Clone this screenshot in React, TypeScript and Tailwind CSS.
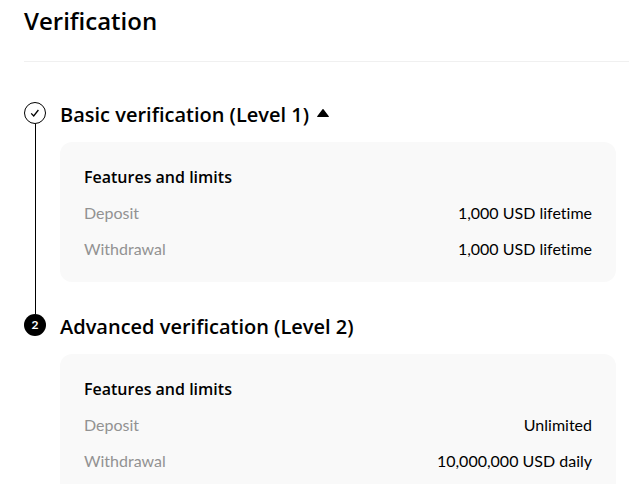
import React, { useState } from 'react'

type Limit = { label: string; value: string }

const basicLimits: Limit[] = [
  { label: 'Deposit', value: '1,000 USD lifetime' },
  { label: 'Withdrawal', value: '1,000 USD lifetime' },
]

const advancedLimits: Limit[] = [
  { label: 'Deposit', value: 'Unlimited' },
  { label: 'Withdrawal', value: '10,000,000 USD daily' },
]

function LimitsCard({ limits }: { limits: Limit[] }) {
  return (
    <div className="mt-3.5 rounded-xl bg-[#f9f9f9] px-6 pt-6 pb-[22px] text-base leading-[22px]">
      <h3 className="font-['Open_Sans',sans-serif] font-semibold">Features and limits</h3>
      <dl>
        {limits.map((limit) => (
          <div key={limit.label} className="mt-3.5 flex justify-between gap-4">
            <dt className="text-[#929292]">{limit.label}</dt>
            <dd className="text-right">{limit.value}</dd>
          </div>
        ))}
      </dl>
    </div>
  )
}

function App() {
  const [open, setOpen] = useState(true)

  return (
    <main className="h-screen overflow-hidden bg-white pl-6 font-['Lato',sans-serif] text-black [font-variant-ligatures:none]">
      <h1 className="border-b border-[#f0f0f0] pt-[5px] pb-[25px] font-['Open_Sans',sans-serif] text-2xl leading-[31px] font-semibold">Verification</h1>
      <ol className="mt-10 pr-[13px]">
        <li className="flex gap-3.5">
          <div className="flex w-[22px] shrink-0 flex-col items-center">
            <span className="flex size-[22px] shrink-0 items-center justify-center rounded-full border border-black">
              <svg className="size-2.5" viewBox="0 0 10 10" fill="none" stroke="currentColor" strokeWidth="1.3" aria-label="Completed">
                <path d="M1.2 5.4 3.7 8 8.4 2" />
              </svg>
            </span>
            <span className="w-px flex-1 bg-black" />
          </div>
          <div className="flex-1 pb-8">
            <h2 className="font-['Open_Sans',sans-serif] text-xl leading-[26px] font-semibold">
              <button type="button" className="flex items-center gap-2" aria-expanded={open} onClick={() => setOpen(!open)}>
                Basic verification (Level 1)
                <svg className={open ? 'mb-1 h-2 w-3' : 'mb-1 h-2 w-3 rotate-180'} viewBox="0 0 12 8" fill="currentColor" aria-hidden="true">
                  <path d="M5.5.3a.7.7 0 0 1 1 0L11.8 7.2a.5.5 0 0 1-.4.8H.6a.5.5 0 0 1-.4-.8z" />
                </svg>
              </button>
            </h2>
            {open && <LimitsCard limits={basicLimits} />}
          </div>
        </li>
        <li className="flex gap-3.5">
          <span className="flex size-[22px] shrink-0 items-center justify-center rounded-full bg-black text-xs font-bold text-white">
            2
          </span>
          <div className="flex-1">
            <h2 className="font-['Open_Sans',sans-serif] text-xl leading-[26px] font-semibold">Advanced verification (Level 2)</h2>
            <LimitsCard limits={advancedLimits} />
          </div>
        </li>
      </ol>
    </main>
  )
}

export default App
